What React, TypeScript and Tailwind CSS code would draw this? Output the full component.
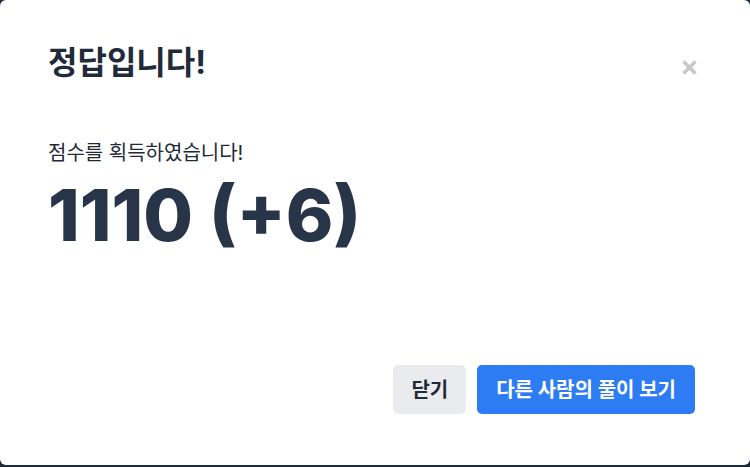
export default function App() {
  return (
    <div
      className="h-[467px] w-[750px] overflow-hidden bg-[#1e293b]"
      style={{ fontFamily: 'Inter, "Noto Sans CJK KR", sans-serif' }}
    >
      <div className="flex h-[465px] w-[750px] flex-col rounded-[6px] bg-white pl-12 pr-[55px]">
        <header className="flex items-start justify-between pt-[43px]">
          <h1 className="text-[32px] font-bold leading-[40px] text-[#1f2a3a]">정답입니다!</h1>
          <button className="-mr-[3px] mt-[16px] text-[#c8c8c8]" aria-label="닫기">
            <svg width="17" height="17" viewBox="0 0 17 17">
              <path d="M2.5 2.5l12 12M14.5 2.5l-12 12" stroke="currentColor" strokeWidth="3.5" />
            </svg>
          </button>
        </header>
        <p className="mt-[56px] text-[20px] leading-[28px] text-[#1f2937]">점수를 획득하였습니다!</p>
        <p className="mt-[8px] text-[72px] font-extrabold leading-[80px] text-[#283548]">1110 (+6)</p>
        <footer className="mt-auto mb-[51px] flex justify-end gap-[11px]">
          <button className="h-[49px] rounded-[5px] bg-[#e9ebef] px-[18px] text-[20px] font-bold text-[#1f2937]">
            닫기
          </button>
          <button className="h-[49px] rounded-[5px] bg-[#2d7cf3] px-[19px] text-[20px] font-bold text-white">
            다른 사람의 풀이 보기
          </button>
        </footer>
      </div>
    </div>
  );
}
